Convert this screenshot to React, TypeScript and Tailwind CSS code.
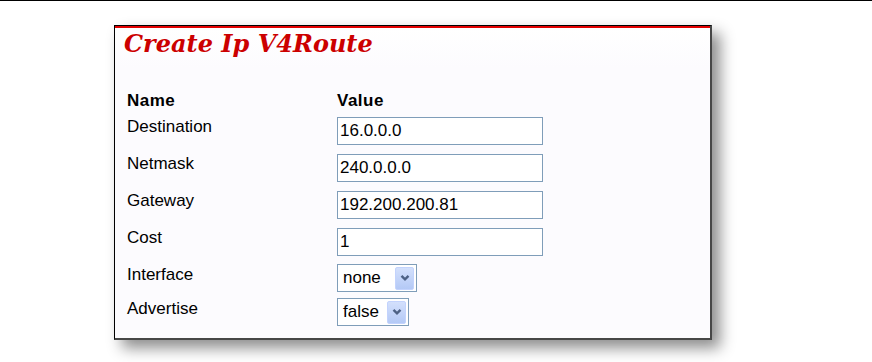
import React from "react";

type Row = {
  label: string;
  kind: "input" | "select";
  value: string;
  width: number;
  mt: number;
  pt: number;
};

const rows: Row[] = [
  { label: "Destination", kind: "input", value: "16.0.0.0", width: 206, mt: 0, pt: 0 },
  { label: "Netmask", kind: "input", value: "240.0.0.0", width: 206, mt: 9, pt: 0 },
  { label: "Gateway", kind: "input", value: "192.200.200.81", width: 206, mt: 9, pt: 0 },
  { label: "Cost", kind: "input", value: "1", width: 206, mt: 9, pt: 0 },
  { label: "Interface", kind: "select", value: "none", width: 80, mt: 8, pt: 1 },
  { label: "Advertise", kind: "select", value: "false", width: 72, mt: 6, pt: 1 },
];

function Chevron() {
  return (
    <svg width="10" height="8" viewBox="0 0 10 8">
      <path d="M1.5 1.8 L5 5.3 L8.5 1.8" fill="none" stroke="#4d6185" strokeWidth="2.4" />
    </svg>
  );
}

function Field({ row }: { row: Row }) {
  if (row.kind === "input") {
    return (
      <div
        className="h-[28px] border border-[#7f9db9] bg-white pl-[2px] flex items-center text-[17px] leading-[20px] text-black"
        style={{ width: row.width }}
      >
        {row.value}
      </div>
    );
  }
  return (
    <div
      className="h-[28px] border border-[#7f9db9] bg-white pl-[5px] pr-[2px] flex items-center justify-between text-[17px] leading-[20px] text-black"
      style={{ width: row.width }}
    >
      <span>{row.value}</span>
      <div className="w-[19px] h-[23px] rounded-[2px] border border-[#c3d3fd] bg-gradient-to-b from-[#d3e0fc] to-[#b4c9f6] flex items-center justify-center">
        <Chevron />
      </div>
    </div>
  );
}

export default function App() {
  return (
    <div
      className="w-[872px] h-[362px] bg-white overflow-hidden"
      style={{ fontFamily: '"Liberation Sans", Arial, sans-serif' }}
    >
      <div className="h-[1px] bg-black" />
      <div className="ml-[114px] mt-[24px] w-[598px] h-[315px] border-l border-t border-black border-r-2 border-b-2 border-r-[#474747] border-b-[#474747] bg-[#fcfbfe] shadow-[8px_8px_14px_rgba(0,0,0,0.45)] flex flex-col">
        <div className="h-[2px] bg-[#e30000]" />
        <div className="bg-gradient-to-b from-white to-[#fcfbfe] pt-[2px] pl-[9px] h-[40px]">
          <div
            className="text-[24px] leading-[28px] font-bold italic text-[#cc0000]"
            style={{ fontFamily: '"DejaVu Serif", Georgia, serif' }}
          >
            Create Ip V4Route
          </div>
        </div>
        <div className="pl-[12px] mt-[23px] flex flex-col">
          <div className="flex text-[17px] leading-[20px] font-bold tracking-[0.5px] text-black">
            <div className="w-[210px]">Name</div>
            <div>Value</div>
          </div>
          <div className="mt-[6px] flex flex-col">
            {rows.map((r) => (
              <div key={r.label} className="flex items-start" style={{ marginTop: r.mt }}>
                <div
                  className="w-[210px] text-[17px] leading-[20px] text-black"
                  style={{ paddingTop: r.pt }}
                >
                  {r.label}
                </div>
                <Field row={r} />
              </div>
            ))}
          </div>
        </div>
      </div>
    </div>
  );
}
